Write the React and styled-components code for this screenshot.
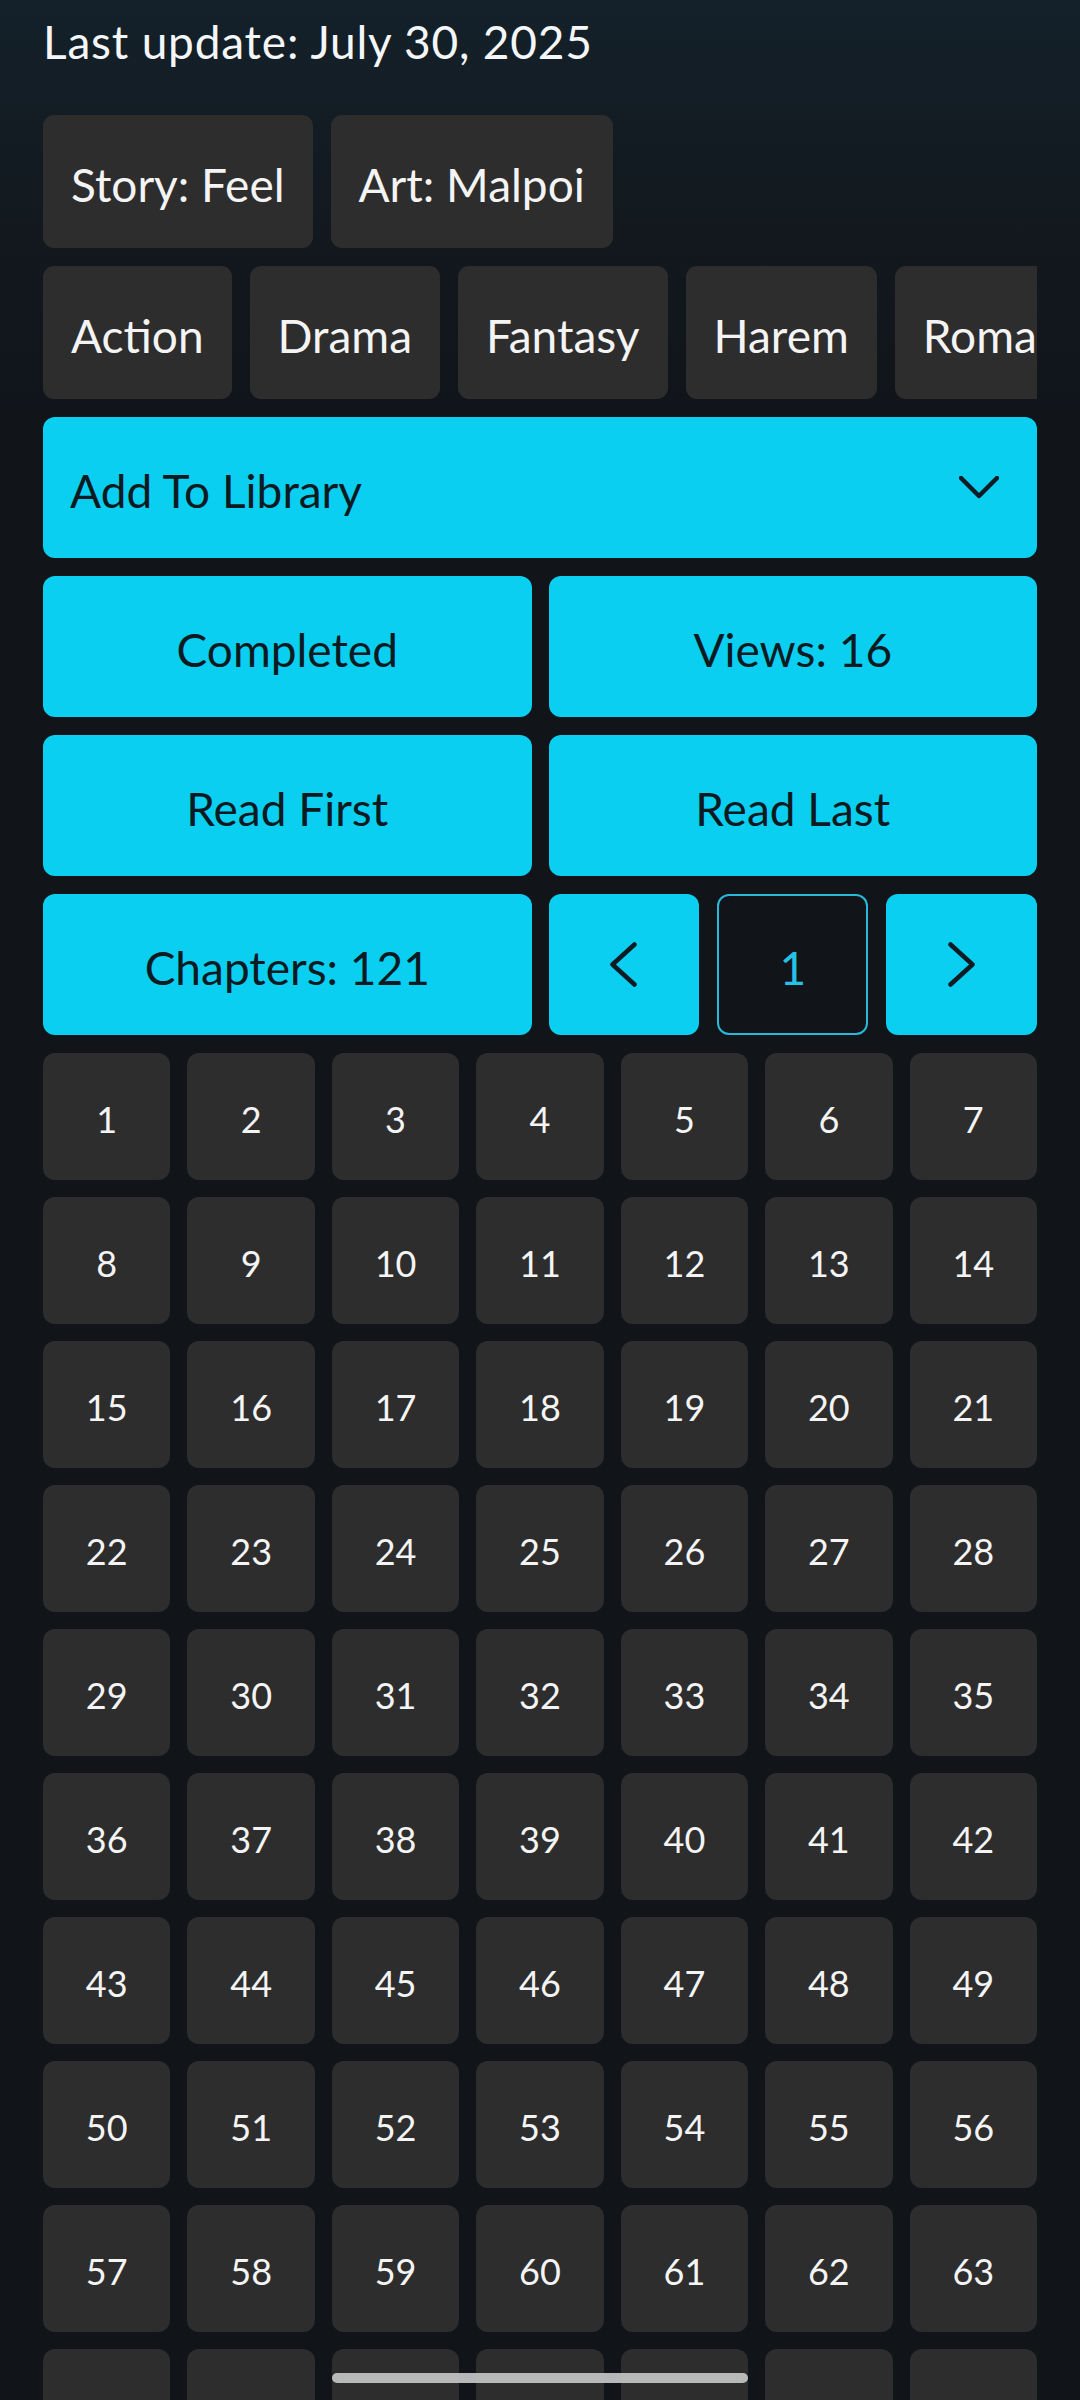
import styled, { createGlobalStyle } from "styled-components";

const GlobalStyle = createGlobalStyle`
  * { box-sizing: border-box; }
  body {
    margin: 0;
    background: #11151a;
    font-family: Lato, "Open Sans", sans-serif;
  }
`;

const Screen = styled.div`
  height: 100vh;
  overflow: hidden;
  padding: 14px 43px 0;
  background: linear-gradient(180deg, #14212a 0px, #12181e 240px, #11151a 420px);
`;

const Title = styled.h1`
  margin: 0 0 46px;
  font-size: 46px;
  line-height: 55px;
  font-weight: 400;
  letter-spacing: 0.8px;
  color: #f4f6f7;
`;

const Stack = styled.div`
  display: flex;
  flex-direction: column;
  gap: 18px;
`;

const ChipRow = styled.div`
  display: flex;
  gap: 18px;
  overflow: hidden;
  white-space: nowrap;
`;

const Chip = styled.div`
  flex: none;
  height: 133px;
  padding: 6px 28px 0;
  display: flex;
  align-items: center;
  background: #2d2d2d;
  border-radius: 11px;
  color: #f4f4f4;
  font-size: 46px;
`;

const CyanButton = styled.div`
  height: 141px;
  display: flex;
  align-items: center;
  justify-content: ${(props) => (props.spread ? "space-between" : "center")};
  padding: ${(props) => (props.spread ? "5px 38px 0 27px" : "5px 0 0")};
  background: #0acff0;
  border-radius: 12px;
  color: #0d1a21;
  font-size: 46px;
`;

const IconSlot = styled.span`
  display: flex;
  margin-top: ${(props) => props.lift || 0}px;
`;

const Pair = styled.div`
  display: grid;
  grid-template-columns: 1fr 1fr;
  gap: 17px;
`;

const Pager = styled.div`
  display: grid;
  grid-template-columns: 1fr 1fr 1fr;
  gap: 18px;
`;

const PageBox = styled.div`
  height: 141px;
  display: flex;
  align-items: center;
  justify-content: center;
  padding-top: 5px;
  border: 2.5px solid #27b9da;
  border-radius: 12px;
  background: #11151a;
  color: #25c2e4;
  font-size: 46px;
`;

const ChapterGrid = styled.div`
  display: grid;
  grid-template-columns: repeat(7, 1fr);
  gap: 17px;
`;

const ChapterCell = styled.div`
  height: 127px;
  display: flex;
  align-items: center;
  justify-content: center;
  padding-top: 4px;
  background: #2d2d2d;
  border-radius: 12px;
  color: #f4f4f4;
  font-size: 36px;
`;

const HomeBar = styled.div`
  position: fixed;
  left: 50%;
  bottom: 17px;
  width: 416px;
  height: 10px;
  margin-left: -208px;
  border-radius: 5px;
  background: rgba(196, 198, 198, 0.92);
`;

const Chevron = ({ dir }) => {
  const shapes = {
    down: { w: 40, h: 24, pts: "2,2 20,20 38,2" },
    left: { w: 27, h: 45, pts: "24.5,2.5 2.5,22.5 24.5,42.5" },
    right: { w: 27, h: 45, pts: "2.5,2.5 24.5,22.5 2.5,42.5" },
  };
  const s = shapes[dir];
  return (
    <svg width={s.w} height={s.h} viewBox={`0 0 ${s.w} ${s.h}`}>
      <polyline
        points={s.pts}
        fill="none"
        stroke="#0f1b22"
        strokeWidth="4.5"
        strokeLinecap="round"
        strokeLinejoin="round"
      />
    </svg>
  );
};

const genres = ["Action", "Drama", "Fantasy", "Harem", "Romance", "Seinen"];
const chapters = Array.from({ length: 70 }, (_, i) => i + 1);

const App = () => {
  return (
    <Screen>
      <GlobalStyle />
      <Title>Last update: July 30, 2025</Title>
      <Stack>
        <ChipRow>
          <Chip>Story: Feel</Chip>
          <Chip>Art: Malpoi</Chip>
        </ChipRow>
        <ChipRow>
          {genres.map((g) => (
            <Chip key={g}>{g}</Chip>
          ))}
        </ChipRow>
        <CyanButton spread>
          <span>Add To Library</span>
          <IconSlot lift={-5}>
            <Chevron dir="down" />
          </IconSlot>
        </CyanButton>
        <Pair>
          <CyanButton>Completed</CyanButton>
          <CyanButton>Views: 16</CyanButton>
        </Pair>
        <Pair>
          <CyanButton>Read First</CyanButton>
          <CyanButton>Read Last</CyanButton>
        </Pair>
        <Pair>
          <CyanButton>Chapters: 121</CyanButton>
          <Pager>
            <CyanButton>
              <IconSlot lift={-5}>
                <Chevron dir="left" />
              </IconSlot>
            </CyanButton>
            <PageBox>1</PageBox>
            <CyanButton>
              <IconSlot lift={-5}>
                <Chevron dir="right" />
              </IconSlot>
            </CyanButton>
          </Pager>
        </Pair>
        <ChapterGrid>
          {chapters.map((n) => (
            <ChapterCell key={n}>{n}</ChapterCell>
          ))}
        </ChapterGrid>
      </Stack>
      <HomeBar />
    </Screen>
  );
};

export default App;
